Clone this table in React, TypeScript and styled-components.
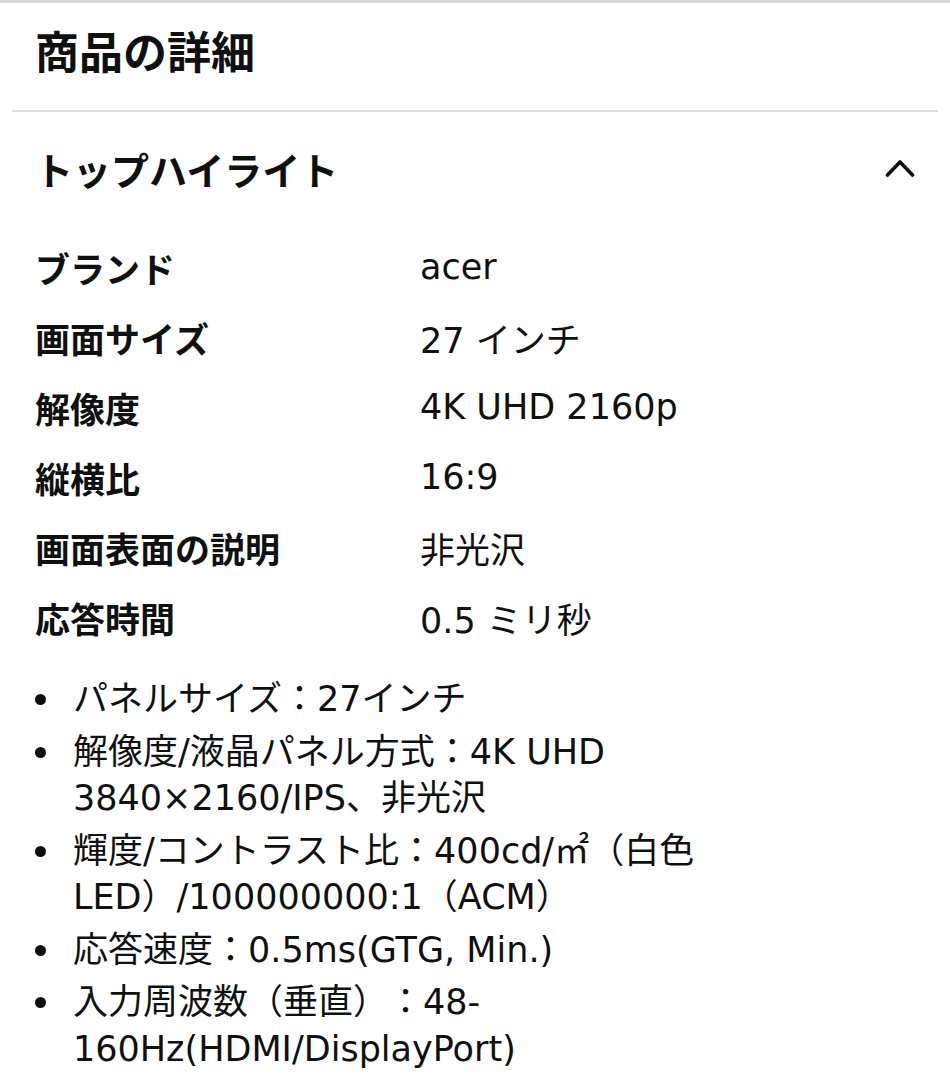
import React from "react";
import styled, { createGlobalStyle } from "styled-components";

const GlobalStyle = createGlobalStyle`
  body {
    margin: 0;
    background: #fff;
    color: #0f1111;
    font-family: "DejaVu Sans", "Noto Sans CJK JP", sans-serif;
    text-spacing-trim: space-all;
  }
`;

const Page = styled.div`
  width: 950px;
  border-top: 3px solid #d8d8d8;
`;

const TitleBar = styled.div`
  display: flex;
  align-items: center;
  height: 107px;
  padding: 0 35px 14px;
  box-sizing: border-box;
`;

const Title = styled.h1`
  margin: 0;
  font-family: "Noto Sans CJK JP", sans-serif;
  font-size: 44px;
  font-weight: 700;
  line-height: 1;
`;

const Divider = styled.hr`
  margin: 0 12px;
  border: 0;
  height: 2px;
  background: #dcdcdc;
`;

const SectionHeader = styled.div`
  display: flex;
  align-items: center;
  justify-content: space-between;
  height: 122px;
  padding: 0 35px 8px;
  box-sizing: border-box;
`;

const SectionTitle = styled.h2`
  margin: 0;
  font-family: "Noto Sans CJK JP", sans-serif;
  font-size: 38px;
  font-weight: 700;
  line-height: 1;
`;

const Toggle = styled.button`
  display: flex;
  padding: 0;
  border: 0;
  background: none;
  color: #0f1111;
  margin-top: -2px;
`;

const Specs = styled.div`
  display: grid;
  grid-template-columns: 385px 1fr;
  padding: 0 35px;
  margin-top: -2px;
`;

const Label = styled.div`
  display: flex;
  align-items: center;
  height: 70px;
  font-family: "Noto Sans CJK JP", sans-serif;
  font-size: 35px;
  font-weight: 700;
`;

const Value = styled.div`
  display: flex;
  align-items: center;
  height: 70px;
  font-size: 35px;
  font-weight: 400;
`;

const Bullets = styled.ul`
  margin: 24px 0 0;
  padding: 0 0 0 73px;
  list-style: none;
`;

const Bullet = styled.li`
  position: relative;
  font-size: 35px;
  line-height: 46.5px;
  white-space: nowrap;
  & + & {
    margin-top: 6px;
  }
  &::before {
    content: "";
    position: absolute;
    left: -38px;
    top: 18px;
    width: 11px;
    height: 11px;
    border-radius: 50%;
    background: #0f1111;
  }
`;

const specs: [string, string][] = [
  ["ブランド", "acer"],
  ["画面サイズ", "27 インチ"],
  ["解像度", "4K UHD 2160p"],
  ["縦横比", "16:9"],
  ["画面表面の説明", "非光沢"],
  ["応答時間", "0.5 ミリ秒"],
];

const bullets: string[][] = [
  ["パネルサイズ：27インチ"],
  ["解像度/液晶パネル方式：4K UHD", "3840×2160/IPS、非光沢"],
  ["輝度/コントラスト比：400cd/㎡（白色", "LED）/100000000:1（ACM）"],
  ["応答速度：0.5ms(GTG, Min.)"],
  ["入力周波数（垂直）：48-", "160Hz(HDMI/DisplayPort)"],
];

const ChevronUp = () => (
  <svg width="30" height="18" viewBox="0 0 30 18" fill="none">
    <polyline
      points="2.5,16 15,3 27.5,16"
      stroke="currentColor"
      strokeWidth="3.6"
      strokeLinecap="round"
      strokeLinejoin="round"
    />
  </svg>
);

export default function App() {
  return (
    <Page>
      <GlobalStyle />
      <TitleBar>
        <Title>商品の詳細</Title>
      </TitleBar>
      <Divider />
      <SectionHeader>
        <SectionTitle>トップハイライト</SectionTitle>
        <Toggle aria-label="折りたたむ">
          <ChevronUp />
        </Toggle>
      </SectionHeader>
      <Specs>
        {specs.map(([k, v]) => (
          <React.Fragment key={k}>
            <Label>{k}</Label>
            <Value>{v}</Value>
          </React.Fragment>
        ))}
      </Specs>
      <Bullets>
        {bullets.map((lines, i) => (
          <Bullet key={i}>
            {lines.map((l, j) => (
              <React.Fragment key={j}>
                {j > 0 && <br />}
                {l}
              </React.Fragment>
            ))}
          </Bullet>
        ))}
      </Bullets>
    </Page>
  );
}
